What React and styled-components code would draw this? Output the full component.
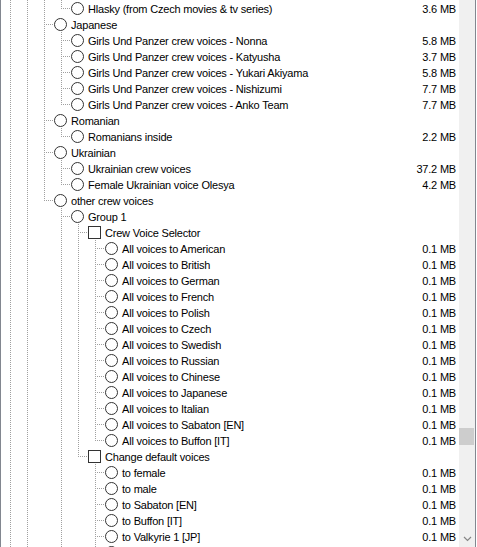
import React from "react";
import styled, { createGlobalStyle, css } from "styled-components";

const GlobalStyle = createGlobalStyle`
  body {
    margin: 0;
    background: #fff;
  }
`;

const dotColor = "#a0a0a0";
const vDots = `linear-gradient(to bottom, ${dotColor} 50%, transparent 50%)`;
const hDots = `linear-gradient(to right, transparent 50%, ${dotColor} 50%)`;

// Component Styling
const Frame = styled.div`
  width: 476px;
  height: 547px;
  box-sizing: border-box;
  border-left: 1px solid #828790;
  border-right: 1px solid #828790;
  display: flex;
  overflow: hidden;
  font-family: "Liberation Sans", Arial, sans-serif;
  font-size: 11px;
  color: #000;
`;

const Tree = styled.div`
  flex: 1;
  min-width: 0;
  overflow: hidden;
`;

const Row = styled.div`
  display: flex;
  height: 16px;
`;

const Guide = styled.div`
  flex: 0 0 17px;
  ${(p) =>
    p.$line &&
    css`
      background: ${vDots} 9px 0 / 1px 2px repeat-y;
    `}
`;

const Connector = styled.div`
  flex: 0 0 19px;
  position: relative;

  &::before {
    content: "";
    position: absolute;
    left: 9px;
    top: 0;
    width: 1px;
    height: ${(p) => (p.$last ? "9px" : "16px")};
    background: ${vDots};
    background-size: 1px 2px;
  }

  &::after {
    content: "";
    position: absolute;
    left: 10px;
    right: 0;
    top: 8px;
    height: 1px;
    background: ${hDots};
    background-size: 2px 1px;
  }
`;

const Mark = styled.span`
  flex: 0 0 13px;
  height: 13px;
  margin-top: 2px;
  box-sizing: border-box;
  border: 1px solid #333;
  border-radius: ${(p) => (p.$box ? "0" : "50%")};
  background: #fff;
`;

const Label = styled.span`
  margin-left: 4px;
  line-height: 18px;
  letter-spacing: -0.2px;
  white-space: nowrap;
`;

const Size = styled.span`
  margin-left: auto;
  padding-right: 3px;
  line-height: 18px;
  letter-spacing: -0.2px;
  white-space: nowrap;
`;

const ScrollBar = styled.div`
  flex: 0 0 16px;
  display: flex;
  flex-direction: column;
  background: #f0f0f0;
`;

const Track = styled.div`
  flex: 1;
`;

const Thumb = styled.div`
  width: 15px;
  height: 17px;
  margin-top: ${(p) => p.$offset}px;
  background: #cdcdcd;
`;

const ArrowButton = styled.div`
  flex: 0 0 17px;
  display: flex;
  align-items: center;
  justify-content: center;
`;

// Data
const ON = true;
const OFF = false;

const row = (guides, last, label, size, box) => ({ guides, last, label, size, box });

const girls = ["Nonna", "Katyusha", "Yukari Akiyama", "Nishizumi", "Anko Team"];
const girlSizes = ["5.8 MB", "3.7 MB", "5.8 MB", "7.7 MB", "7.7 MB"];
const languages = [
  "American", "British", "German", "French", "Polish", "Czech", "Swedish",
  "Russian", "Chinese", "Japanese", "Italian", "Sabaton [EN]", "Buffon [IT]",
];
const defaults = ["female", "male", "Sabaton [EN]", "Buffon [IT]", "Valkyrie 1 [JP]", "Valkyrie 2 [JP]"];

const rows = [
  row([ON, ON, ON], true, "Hlasky (from Czech movies & tv series)", "3.6 MB"),
  row([ON, ON], false, "Japanese"),
  ...girls.map((g, i) =>
    row([ON, ON, ON], i === girls.length - 1, "Girls Und Panzer crew voices - " + g, girlSizes[i])
  ),
  row([ON, ON], false, "Romanian"),
  row([ON, ON, ON], true, "Romanians inside", "2.2 MB"),
  row([ON, ON], false, "Ukrainian"),
  row([ON, ON, ON], false, "Ukrainian crew voices", "37.2 MB"),
  row([ON, ON, ON], true, "Female Ukrainian voice Olesya", "4.2 MB"),
  row([ON, ON], true, "other crew voices"),
  row([ON, ON, OFF], false, "Group 1"),
  row([ON, ON, OFF, ON], false, "Crew Voice Selector", null, true),
  ...languages.map((l, i) =>
    row([ON, ON, OFF, ON, ON], i === languages.length - 1, "All voices to " + l, "0.1 MB")
  ),
  row([ON, ON, OFF, ON], true, "Change default voices", null, true),
  ...defaults.map((d) => row([ON, ON, OFF, ON, OFF], false, "to " + d, "0.1 MB")),
];

// Component
function App() {
  return (
    <>
      <GlobalStyle />
      <Frame>
        <Tree>
          {rows.map((r, i) => (
            <Row key={i}>
              {r.guides.map((g, j) => (
                <Guide key={j} $line={g} />
              ))}
              <Connector $last={r.last} />
              <Mark $box={r.box} />
              <Label>{r.label}</Label>
              {r.size && <Size>{r.size}</Size>}
            </Row>
          ))}
        </Tree>
        <ScrollBar>
          <Track>
            <Thumb $offset={428} />
          </Track>
          <ArrowButton>
            <svg width="9" height="6" viewBox="0 0 9 6">
              <polyline points="1,1 4.5,4.5 8,1" fill="none" stroke="#868686" strokeWidth="1.2" />
            </svg>
          </ArrowButton>
        </ScrollBar>
      </Frame>
    </>
  );
}

export default App;
